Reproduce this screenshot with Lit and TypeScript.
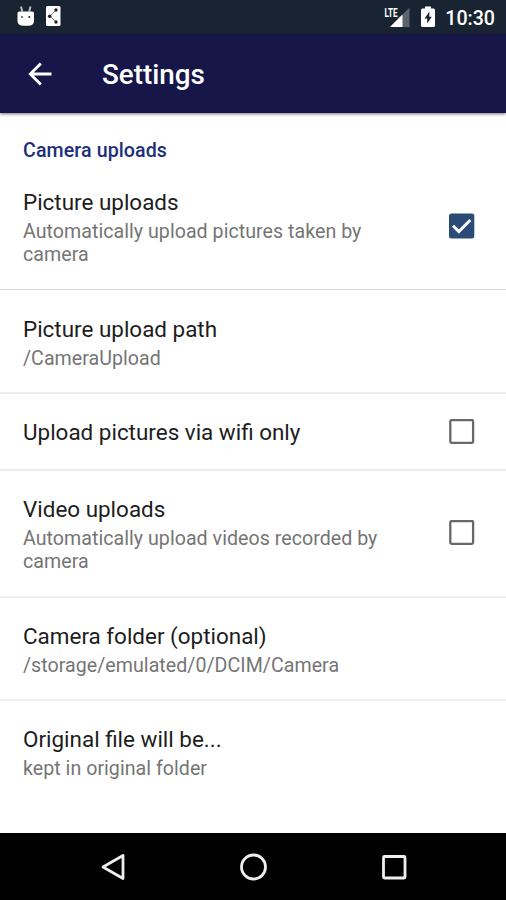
import { LitElement, html, css, svg, nothing } from "lit";
import { customElement, property } from "lit/decorators.js";

interface Pref {
  title: string;
  summary?: string;
  checked?: boolean;
  kind: string;
}

const prefs: Pref[] = [
  { title: "Picture uploads", summary: "Automatically upload pictures taken by camera", checked: true, kind: "first" },
  { title: "Picture upload path", summary: "/CameraUpload", kind: "path" },
  { title: "Upload pictures via wifi only", checked: false, kind: "wifi" },
  { title: "Video uploads", summary: "Automatically upload videos recorded by camera", checked: false, kind: "video" },
  { title: "Camera folder (optional)", summary: "/storage/emulated/0/DCIM/Camera", kind: "folder" },
  { title: "Original file will be...", summary: "kept in original folder", kind: "original" },
];

@customElement("status-bar")
class StatusBar extends LitElement {
  static styles = css`
    :host { display: flex; align-items: center; height: 34px; background: #182431; color: #fff;
      padding: 0 11px 0 16px; box-sizing: border-box; }
    svg { display: block; }
    .share { margin-left: 9px; }
    .gap { flex: 1; }
    .signal { margin-right: 11px; }
    .battery { margin-right: 10px; }
    .time { font-size: 19.6px; font-weight: 500; line-height: 34px; padding-top: 3px; }
  `;
  render() {
    return html`
      <svg width="20" height="24" viewBox="0 0 20 24">
        <path d="M5 1.500L6.300 6.500M14.500 1.500L13.200 6.500" stroke="#b9bec4" stroke-width="2" />
        <path d="M1.500 8Q1.500 6.500 3.500 6.500H16Q18 6.500 18 8V16Q18 20.800 12 20.800H7.500Q1.500 20.800 1.500 16Z" fill="#fff" />
        <circle cx="6" cy="12" r="1" fill="#555" /><circle cx="13.300" cy="12" r="1" fill="#222" />
      </svg>
      <svg class="share" width="17" height="24" viewBox="0 0 17 24">
        <rect x="1" y="1" width="14.500" height="20" rx="1.500" fill="#fff" />
        <path d="M11 5L5 11.200L11 17" fill="none" stroke="#777" stroke-width="1" />
        <circle cx="11" cy="5" r="1.700" fill="#222" /><circle cx="4.700" cy="11.200" r="1.800" fill="#222" />
        <circle cx="11" cy="17" r="1.700" fill="#222" />
      </svg>
      <span class="gap"></span>
      <svg class="signal" width="26" height="24" viewBox="0 0 26 24">
        <path d="M25.500 2.500V22H6L14.500 13.500V11.500H16.500Z" fill="#5a646f" />
        <path d="M18.500 9.500V22H6Z" fill="#fff" />
        <text x="0.500" y="11.500" font-family="Roboto, sans-serif" font-weight="700" font-size="13"
          textLength="13" lengthAdjust="spacingAndGlyphs" fill="#fff">LTE</text>
      </svg>
      <svg class="battery" width="14" height="24" viewBox="0 0 14 24">
        <path d="M4 1.500H10V3.500H12.500Q14 3.500 14 5V20.500Q14 22 12.500 22H1.500Q0 22 0 20.500V5Q0 3.500 1.500 3.500H4Z" fill="#fff" />
        <path d="M8.500 6.500L3.500 13.500H6.200V18.500L10.800 11.800H8.200Z" fill="#182431" />
      </svg>
      <span class="time">10:30</span>
    `;
  }
}

@customElement("pref-row")
class PrefRow extends LitElement {
  @property({ attribute: false }) pref!: Pref;
  static styles = css`
    :host { display: block; }
    .row { display: flex; align-items: center; box-sizing: border-box; padding: 0 31px 0 23px;
      border-bottom: 2px solid #eee; }
    .first { height: 127px; border-bottom: 1px solid #d8d8d8; }
    .path { height: 104px; }
    .wifi { height: 77px; }
    .video { height: 127px; padding-bottom: 2px; }
    .folder { height: 103px; }
    .original { height: 104px; border-bottom: 0; padding-bottom: 4px; }
    .text { width: 380px; }
    .title { font-size: 22.45px; line-height: 30px; color: #1d1d1d; }
    .summary { font-size: 19.6px; line-height: 23px; margin: 3px 0 -1px; color: #757575; letter-spacing: 0.04px; }
    .box { margin-left: auto; display: block; }
  `;
  render() {
    const p = this.pref;
    const box = p.checked
      ? svg`<rect x="0" y="0.500" width="25.300" height="25" rx="2.500" fill="#294b75" /><path d="M4 12.800L9.800 18.600L21.300 7" fill="none" stroke="#fff" stroke-width="3" />`
      : svg`<rect x="1.300" y="1" width="22.800" height="22.800" rx="1.500" fill="none" stroke="#686868" stroke-width="2.300" />`;
    return html`<div class="row ${p.kind}">
      <div class="text">
        <div class="title">${p.title}</div>
        ${p.summary ? html`<div class="summary">${p.summary}</div>` : nothing}
      </div>
      ${p.checked === undefined ? nothing : html`<svg class="box" width="26" height="26" viewBox="0 0 26 26">${box}</svg>`}
    </div>`;
  }
}

@customElement("app-root")
class AppRoot extends LitElement {
  static styles = css`
    :host { display: flex; flex-direction: column; width: 506px; height: 900px; overflow: hidden;
      background: #fff; font-family: Roboto, "Noto Sans", sans-serif; }
    .bar { flex: none; height: 79px; box-sizing: border-box; background: #171648; color: #fff; display: flex;
      align-items: center; padding-left: 28px; box-shadow: 0 1px 3px rgba(0,0,0,.55); }
    .arrow { display: block; }
    .heading { margin-left: 50px; font-size: 27.800px; font-weight: 500; line-height: 34px; padding-top: 3px; }
    .main { flex: 1; min-height: 0; }
    .category { height: 50px; box-sizing: border-box; padding: 26px 23px 0; font-size: 19.6px; font-weight: 500;
      line-height: 24px; color: #1c2f78; letter-spacing: 0.1px; }
    .nav { flex: none; height: 67px; background: #000; display: flex; align-items: center;
      justify-content: space-between; padding: 0 98px; }
  `;
  render() {
    return html`
      <status-bar></status-bar>
      <div class="bar">
        <svg class="arrow" width="24" height="24" viewBox="0 0 24 24">
          <path d="M23.500 12H3M12.800 1.500L2.300 12L12.800 22.500" fill="none" stroke="#fff" stroke-width="2.800" />
        </svg>
        <div class="heading">Settings</div>
      </div>
      <div class="main">
        <div class="category">Camera uploads</div>
        ${prefs.map((p) => html`<pref-row .pref=${p}></pref-row>`)}
      </div>
      <div class="nav">
        <svg width="30" height="30" viewBox="0 0 30 30"><path d="M25 3.500V26.500L5 15Z" fill="none" stroke="#eee" stroke-width="2.800" stroke-linejoin="round" /></svg>
        <svg width="30" height="30" viewBox="0 0 30 30"><circle cx="15.500" cy="15" r="12" fill="none" stroke="#eee" stroke-width="2.800" /></svg>
        <svg width="30" height="30" viewBox="0 0 30 30"><rect x="5.500" y="4.500" width="21.500" height="21.500" rx="1" fill="none" stroke="#eee" stroke-width="2.800" /></svg>
      </div>
    `;
  }
}
